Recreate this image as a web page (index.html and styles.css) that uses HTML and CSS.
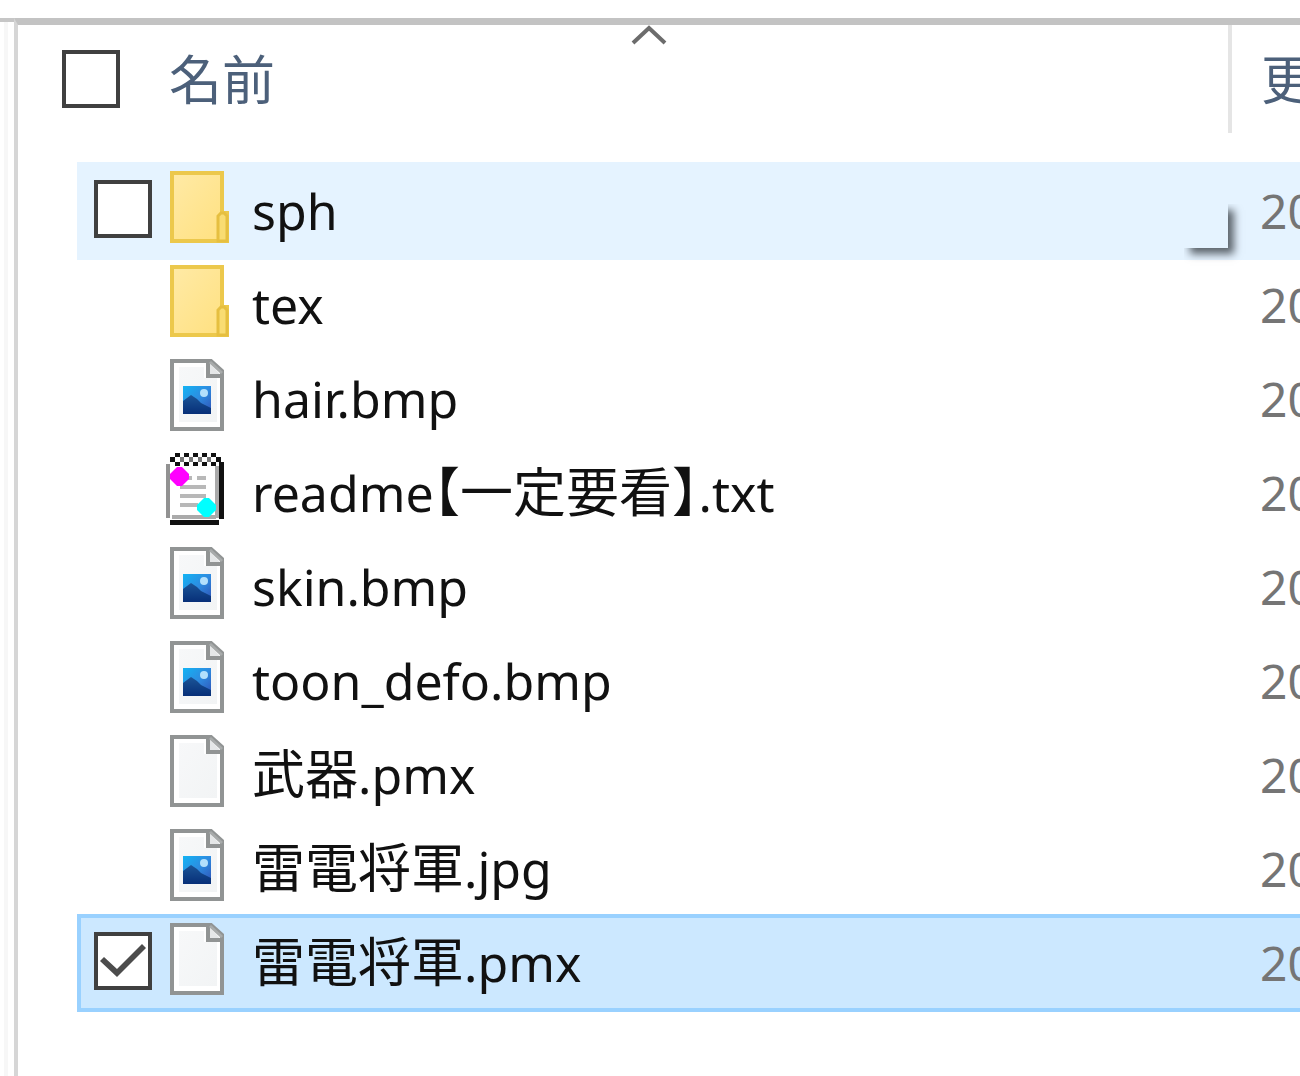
FILE: index.html
```html
<!DOCTYPE html>
<html lang="ja">
<head>
<meta charset="utf-8">
<title>ファイル一覧</title>
<link rel="stylesheet" href="styles.css">
</head>
<body>
<svg class="defs" aria-hidden="true">
  <defs>
    <linearGradient id="folder-fill" x1="0" y1="0" x2="1" y2="1"><stop offset="0" stop-color="#ffeaa6"/><stop offset="1" stop-color="#ffe07e"/></linearGradient>
    <linearGradient id="page-fill" x1="0" y1="0" x2="1" y2="1"><stop offset="0" stop-color="#f7f8f9"/><stop offset="1" stop-color="#f2f4f5"/></linearGradient>
    <linearGradient id="sky-fill" x1="0" y1="0" x2="1" y2="1"><stop offset="0" stop-color="#12b4f4"/><stop offset=".5" stop-color="#2e8be0"/><stop offset="1" stop-color="#2f4fb4"/></linearGradient>
    <linearGradient id="hill-fill" x1="0" y1="0" x2="0" y2="1"><stop offset="0" stop-color="#1b5597"/><stop offset="1" stop-color="#072f78"/></linearGradient>
    <symbol id="folder" viewBox="0 0 64 72">
      <path d="M6 2H56V42H61V70H6Z" fill="url(#folder-fill)" stroke="#ecc84c" stroke-width="4"/>
      <path d="M52 70V45L55 42H58L61 45V70Z" fill="#f9dc72" stroke="#e6bf40" stroke-width="3"/>
    </symbol>
    <symbol id="page" viewBox="0 0 64 72">
      <path d="M6 2H45L56 12V70H6Z" fill="#fff" stroke="#919494" stroke-width="4"/>
      <path d="M13 8H38V19H51V63H13Z" fill="url(#page-fill)"/>
      <path d="M42 3V17H56" fill="#e5e7e8" stroke="#919494" stroke-width="4"/>
      <path d="M44 3L56 14" stroke="#a8abab" stroke-width="3"/>
    </symbol>
    <symbol id="picture" viewBox="0 0 64 72">
      <use href="#page" width="64" height="72"/>
      <path d="M17 27H45V55H17Z" fill="url(#sky-fill)"/>
      <path d="M17 42L25 36L31 40L35 44L45 49V55H17Z" fill="url(#hill-fill)"/>
      <circle cx="38" cy="34" r="4" fill="#b4e0fc"/>
    </symbol>
    <symbol id="notepad" viewBox="0 0 64 72">
      <path d="M6 9H54V66H6Z" fill="#fff"/>
      <path d="M2 11V65" stroke="#929292" stroke-width="4"/>
      <path d="M6 64H50M51 13V65" stroke="#aaa" stroke-width="4" fill="none"/>
      <path d="M4 69.500H53" stroke="#111" stroke-width="5"/>
      <path d="M55.500 9V66" stroke="#111" stroke-width="5"/>
      <path d="M9 0h5v4h-5zM18 0h5v4h-5zM27 0h5v4h-5zM36 0h5v4h-5zM45 0h5v4h-5zM4 4h5v5h-5zM50 4h5v5h-5zM9 9h5v4h-5zM18 9h5v4h-5zM27 9h5v4h-5zM36 9h5v4h-5zM45 9h5v4h-5z" fill="#111"/>
      <path d="M14 4h4v5h-4zM23 4h4v5h-4zM32 4h4v5h-4zM41 4h4v5h-4z" fill="#777"/>
      <path d="M22 25H26M31 25H40M14 34H40M14 43H40M14 52H32" stroke="#b8b8b8" stroke-width="4"/>
      <path d="M11 14H16L23 21V26L16 33H11L4 26V21Z" fill="#f0f"/>
      <path d="M38 45H43L50 52V57L43 64H38L31 57V52Z" fill="#0ff"/>
    </symbol>
  </defs>
</svg>
<main class="window">
  <div class="splitter"></div>
  <table class="files">
    <thead>
      <tr class="head">
        <th class="pick"><input type="checkbox" class="check" aria-label="すべて選択"></th>
        <th class="name"><span class="cjk">名前</span>
          <svg class="sort" viewBox="0 0 36 20" aria-hidden="true"><path d="M2 18L18 3L34 18" fill="none" stroke="#6c6c6c" stroke-width="4"/></svg>
        </th>
        <th class="date"><span class="cjk">更</span></th>
      </tr>
    </thead>
    <tbody>
      <tr class="row hovered">
        <td class="pick"><input type="checkbox" class="check" aria-label="sph"></td>
        <td class="name"><svg class="icon"><use href="#folder"/></svg><span>sph</span></td>
        <td class="date">20<div class="tip-edge"></div></td>
      </tr>
      <tr class="row">
        <td class="pick"></td>
        <td class="name"><svg class="icon"><use href="#folder"/></svg><span>tex</span></td>
        <td class="date">20</td>
      </tr>
      <tr class="row">
        <td class="pick"></td>
        <td class="name"><svg class="icon"><use href="#picture"/></svg><span>hair.bmp</span></td>
        <td class="date">20</td>
      </tr>
      <tr class="row">
        <td class="pick"></td>
        <td class="name"><svg class="icon"><use href="#notepad"/></svg><span>readme<span class="cjk">【一定要看】</span>.txt</span></td>
        <td class="date">20</td>
      </tr>
      <tr class="row">
        <td class="pick"></td>
        <td class="name"><svg class="icon"><use href="#picture"/></svg><span>skin.bmp</span></td>
        <td class="date">20</td>
      </tr>
      <tr class="row">
        <td class="pick"></td>
        <td class="name"><svg class="icon"><use href="#picture"/></svg><span>toon_defo.bmp</span></td>
        <td class="date">20</td>
      </tr>
      <tr class="row">
        <td class="pick"></td>
        <td class="name"><svg class="icon"><use href="#page"/></svg><span><span class="cjk">武器</span>.pmx</span></td>
        <td class="date">20</td>
      </tr>
      <tr class="row">
        <td class="pick"></td>
        <td class="name"><svg class="icon"><use href="#picture"/></svg><span><span class="cjk">雷電将軍</span>.jpg</span></td>
        <td class="date">20</td>
      </tr>
      <tr class="row selected">
        <td class="pick"><input type="checkbox" class="check" aria-label="雷電将軍.pmx" checked></td>
        <td class="name"><svg class="icon"><use href="#page"/></svg><span><span class="cjk">雷電将軍</span>.pmx</span></td>
        <td class="date">20</td>
      </tr>
    </tbody>
  </table>
</main>
</body>
</html>
```
FILE: styles.css
```css
* { box-sizing: border-box; }

body {
  margin: 0;
  background: #fff;
  color: #111;
  font-family: "Noto Sans", "Noto Sans CJK JP", sans-serif;
  font-size: 50px;
  line-height: 60px;
}

.defs { position: absolute; width: 0; height: 0; }

.window {
  display: flex;
  min-height: 100vh;
  padding-top: 18px;
  overflow: hidden;
}

.splitter {
  flex: none;
  width: 14px;
  border-top: 4px solid #c6c6c6;
  background: linear-gradient(90deg, #fff 4px, #f7f7f7 4px, #f7f7f7 8px, #fff 8px);
}

.files {
  display: block;
  flex: 1;
  min-width: 0;
  border-top: 7px solid #c3c3c3;
  border-left: 4px solid #d6d6d6;
}

.files thead,
.files tbody { display: block; }

th,
td {
  padding: 0;
  font-weight: 400;
  text-align: left;
}

.head,
.row {
  display: grid;
  align-items: center;
}

.head {
  grid-template-columns: 151px 1fr 72px;
  height: 108px;
  color: #4c607a;
}

.head .pick { padding-left: 44px; }

.head .name {
  position: relative;
  padding-top: 4px;
}

.head .date {
  height: 108px;
  padding: 26px 0 0 29px;
  border-left: 4px solid #e5e5e5;
}

.sort {
  position: absolute;
  left: 462px;
  top: -22px;
  width: 36px;
  height: 20px;
}

.files tbody { padding: 29px 0 0 59px; }

.row {
  grid-template-columns: 88px 1fr 68px;
  height: 98px;
  margin-bottom: -4px;
  border: 4px solid transparent;
  border-right: 0;
}

.row .pick { padding-left: 13px; }

.row .name {
  display: flex;
  align-items: center;
  gap: 22px;
  white-space: nowrap;
}

.date {
  overflow: hidden;
  white-space: nowrap;
}

.row .date {
  padding-left: 28px;
  color: #757575;
  font-size: 48px;
}

.hovered {
  position: relative;
  border-color: #e5f3ff;
  background: #e5f3ff;
}

.selected {
  border-color: #99d1ff;
  background: #cce8ff;
}

.cjk {
  font-family: "Noto Sans CJK JP", sans-serif;
  font-size: 53px;
  line-height: 1px;
  font-feature-settings: "halt";
}

.icon {
  flex: none;
  width: 64px;
  height: 72px;
  margin: 0 0 8px -3px;
}

.check {
  display: grid;
  place-items: center;
  appearance: none;
  width: 58px;
  height: 58px;
  margin: 0;
  border: 4px solid #404040;
  background: #fff;
}

.row .check { margin-bottom: 4px; }

.check:checked::before {
  content: "";
  width: 46px;
  height: 34px;
  background: #4c4c4c;
  clip-path: polygon(0 17px, 4px 13px, 17px 25px, 42px 0, 46px 4px, 17px 33px);
}

/* Lower-right corner of the tooltip's drop shadow */
.tip-edge {
  position: absolute;
  right: 72px;
  bottom: 8px;
  width: 44px;
  height: 44px;
  background: #e5f3ff;
  box-shadow: 6px 6px 8px #5c646c;
  clip-path: inset(0 -20px -20px 0);
}
```
